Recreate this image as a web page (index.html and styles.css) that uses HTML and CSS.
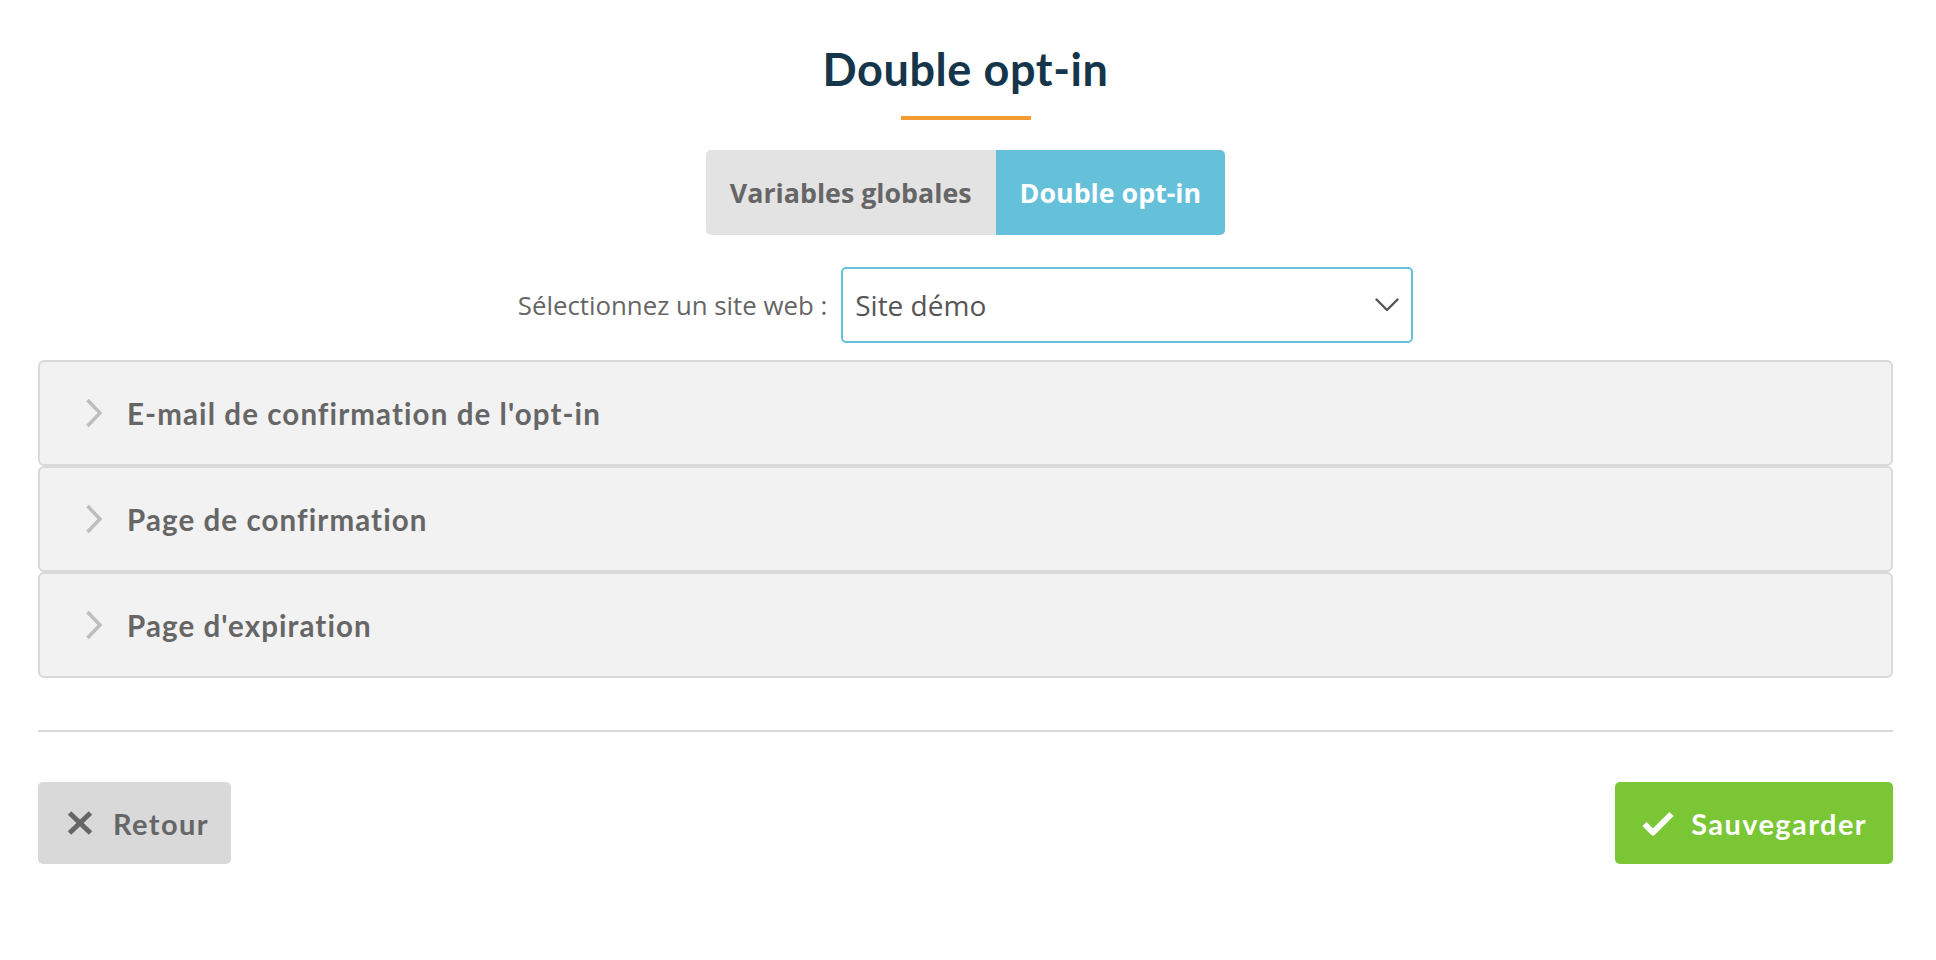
FILE: index.html
```html
<!DOCTYPE html>
<html lang="fr">
<head>
    <meta charset="UTF-8">
    <meta name="viewport" content="width=device-width, initial-scale=1.0">
    <title>Double opt-in</title>
    <link rel="stylesheet" href="styles.css">
</head>
<body>
    <div class="container">
        <!-- titre -->
        <div class="header">
            <h1>Double opt-in</h1>
            <div class="underline"></div>
        </div>

        <!-- onglets -->
        <div class="tabs">
            <div class="tab">Variables globales</div>
            <div class="tab active">Double opt-in</div>
        </div>

        <!-- choix du site -->
        <div class="site-row">
            <label class="site-label" for="site">Sélectionnez un site web :</label>
            <div class="select-wrap">
                <select id="site" class="site-select">
                    <option>Site démo</option>
                </select>
                <svg class="select-arrow" width="24" height="14" viewBox="0 0 24 14">
                    <polyline points="1.5,1.5 12,12 22.5,1.5" fill="none" stroke="#555" stroke-width="2.4" stroke-linecap="round" stroke-linejoin="round"/>
                </svg>
            </div>
        </div>

        <!-- accordeon -->
        <div class="panels">
            <div class="panel">
                <svg class="chevron" width="18" height="30" viewBox="0 0 18 30">
                    <polyline points="2.5,2 15,15 2.5,28" fill="none" stroke="#bdbdbd" stroke-width="3.4"/>
                </svg>
                <span class="panel-title">E-mail de confirmation de l'opt-in</span>
            </div>
            <div class="panel">
                <svg class="chevron" width="18" height="30" viewBox="0 0 18 30">
                    <polyline points="2.5,2 15,15 2.5,28" fill="none" stroke="#bdbdbd" stroke-width="3.4"/>
                </svg>
                <span class="panel-title">Page de confirmation</span>
            </div>
            <div class="panel">
                <svg class="chevron" width="18" height="30" viewBox="0 0 18 30">
                    <polyline points="2.5,2 15,15 2.5,28" fill="none" stroke="#bdbdbd" stroke-width="3.4"/>
                </svg>
                <span class="panel-title">Page d'expiration</span>
            </div>
        </div>

        <hr class="sep">

        <!-- boutons -->
        <div class="actions">
            <button class="btn btn-back">
                <svg width="26" height="24" viewBox="0 0 26 24">
                    <line x1="2.5" y1="2" x2="23.5" y2="22" stroke="#666" stroke-width="5"/>
                    <line x1="23.5" y1="2" x2="2.5" y2="22" stroke="#666" stroke-width="5"/>
                </svg>
                <span>Retour</span>
            </button>
            <button class="btn btn-save">
                <svg width="34" height="27" viewBox="0 0 34 27">
                    <polyline points="3.5,14 12,22.5 30.5,4" fill="none" stroke="#fff" stroke-width="6" stroke-linejoin="round"/>
                </svg>
                <span>Sauvegarder</span>
            </button>
        </div>
    </div>
</body>
</html>
```

FILE: styles.css
```css
* {
    padding: 0;
    margin: 0;
    box-sizing: border-box;
}

body {
    font-family: "Open Sans", "Liberation Sans", sans-serif;
    color: #666;
    background: #fff;
}

.container {
    padding: 0 43px 0 38px;
}

/* titre + trait orange */
.header {
    padding-top: 44px;
    display: flex;
    flex-direction: column;
    align-items: center;
}
.header h1 {
    font-family: Lato, "Liberation Sans", sans-serif;
    font-weight: 700;
    font-size: 45px;
    line-height: 50px;
    letter-spacing: 0.6px;
    color: #15364a;
}
.underline {
    width: 130px;
    height: 4px;
    margin-top: 22px;
    background-color: #f39c33;
}

/* onglets */
.tabs {
    display: flex;
    justify-content: center;
    margin-top: 30px;
}
.tab {
    height: 85px;
    line-height: 85px;
    padding: 0 24px;
    font-size: 26.8px;
    font-weight: 700;
    color: #666;
    background-color: #e3e3e3;
    cursor: pointer;
}
.tab:first-child {
    border-radius: 5px 0 0 5px;
}
.tab:last-child {
    border-radius: 0 5px 5px 0;
}
.tab.active {
    color: #fff;
    background-color: #65c0da;
}

/* select du site */
.site-row {
    display: flex;
    justify-content: center;
    align-items: center;
    gap: 14px;
    margin-top: 32px;
}
.site-label {
    font-size: 25.8px;
    color: #666;
}
.select-wrap {
    position: relative;
    width: 572px;
    height: 76px;
}
.site-select {
    width: 100%;
    height: 100%;
    padding: 0 50px 0 12px;
    border: 2px solid #65c0da;
    border-radius: 5px;
    background: #fff;
    font-family: "Open Sans", "Liberation Sans", sans-serif;
    font-size: 28px;
    color: #555;
    appearance: none;
    -webkit-appearance: none;
    outline: none;
}
.select-arrow {
    position: absolute;
    right: 14px;
    top: 31px;
    pointer-events: none;
}

/* accordeon */
.panels {
    margin-top: 17px;
}
.panel {
    height: 106px;
    display: flex;
    align-items: center;
    padding-left: 45px;
    border: 2px solid #d9d9d9;
    border-radius: 6px;
    background-color: #f2f2f2;
    cursor: pointer;
}
.chevron {
    flex-shrink: 0;
    margin-right: 24px;
}
.panel-title {
    font-family: Lato, "Liberation Sans", sans-serif;
    font-weight: 700;
    font-size: 29.5px;
    letter-spacing: 1.1px;
    color: #666;
}

.sep {
    margin-top: 52px;
    border: none;
    height: 2px;
    background-color: #d9d9d9;
}

/* boutons */
.actions {
    display: flex;
    justify-content: space-between;
    margin-top: 50px;
}
.btn {
    height: 82px;
    display: flex;
    align-items: center;
    border: none;
    border-radius: 5px;
    font-family: Lato, "Liberation Sans", sans-serif;
    font-weight: 700;
    font-size: 29px;
    letter-spacing: 1.4px;
    cursor: pointer;
}
.btn-back {
    padding: 0 22px 0 29px;
    gap: 20px;
    color: #666;
    background-color: #d9d9d9;
}
.btn-save {
    padding: 0 26px;
    gap: 16px;
    color: #fff;
    background-color: #7ac634;
}
```
